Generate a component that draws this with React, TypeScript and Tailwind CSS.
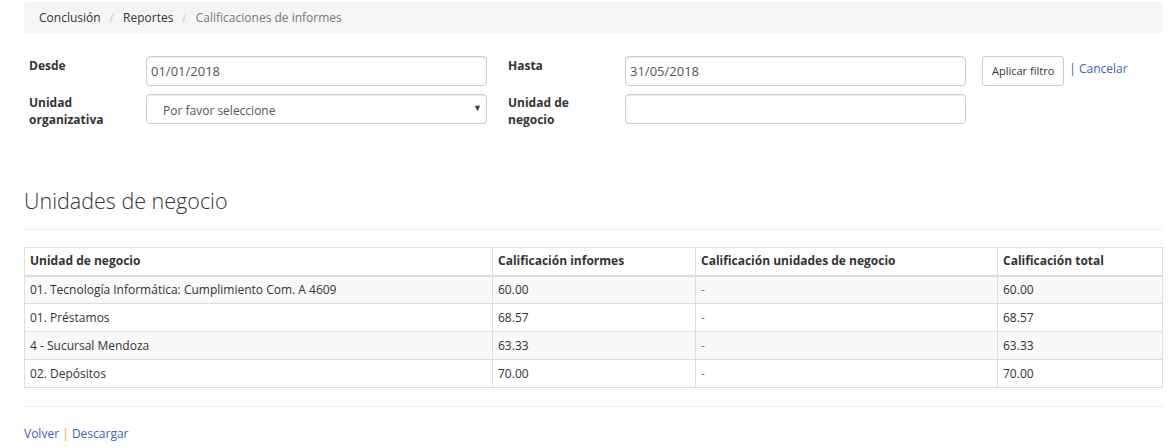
const ROWS = [
  { unidad: '01. Tecnología Informática: Cumplimiento Com. A 4609', informes: '60.00', total: '60.00' },
  { unidad: '01. Préstamos', informes: '68.57', total: '68.57' },
  { unidad: '4 - Sucursal Mendoza', informes: '63.33', total: '63.33' },
  { unidad: '02. Depósitos', informes: '70.00', total: '70.00' }
]

const inputCls =
  'h-[30px] rounded-[4px] border border-[#ccc] bg-white px-[4px] text-[13px] text-[#555] shadow-[inset_0_1px_1px_rgba(0,0,0,0.075)] outline-none'

export default function App() {
  return (
    <div className="min-h-[448px] bg-white pl-6 pr-[13px] font-['Open_Sans',sans-serif] text-[12px] text-[#333]">
      <ol className="mt-[2px] flex h-[31px] items-center rounded-[4px] bg-[#f5f5f5] px-[15px]">
        <li>Conclusión</li>
        <li className="px-[9px] text-[#ccc]">/</li>
        <li>Reportes</li>
        <li className="px-[9px] text-[#ccc]">/</li>
        <li className="text-[#777]">Calificaciones de informes</li>
      </ol>

      <div className="mt-[23px] flex">
        <div className="grid grid-cols-[122px_341px_21px_117px_341px] gap-y-[8px]">
          <label className="pl-[5px] pt-[1px] font-bold leading-[17px]">Desde</label>
          <input defaultValue="01/01/2018" className={inputCls} />
          <div />
          <label className="pt-[1px] font-bold leading-[17px]">Hasta</label>
          <input defaultValue="31/05/2018" className={inputCls} />

          <label className="pl-[5px] font-bold leading-[17px]">
            Unidad
            <br />
            organizativa
          </label>
          <div className="relative h-[30px] rounded-[4px] border border-[#ccc] bg-white shadow-[inset_0_1px_1px_rgba(0,0,0,0.075)]">
            <span className="absolute left-[16px] top-[7px] text-[#555]">Por favor seleccione</span>
            <span className="absolute right-[4px] top-[6px] text-[9px] text-[#444]">▼</span>
          </div>
          <div />
          <label className="font-bold leading-[17px]">
            Unidad de
            <br />
            negocio
          </label>
          <input className={inputCls} />
        </div>

        <div className="ml-[16px] flex h-[30px] items-start">
          <button className="h-[30px] rounded-[3px] border border-[#ccc] bg-white px-[9px] text-[11px] text-[#333]">
            Aplicar filtro
          </button>
          <span className="ml-[5px] mt-[4px]">
            <span className="text-[#555]">|</span> <span className="text-[#3d5fb5]">Cancelar</span>
          </span>
        </div>
      </div>

      <h3 className="mt-[60px] text-[21.5px] font-light leading-[26px] text-[#333]">Unidades de negocio</h3>
      <hr className="mb-[17px] mt-[15px] border-t border-[#eee]" />

      <table className="w-full table-fixed border-collapse border border-[#ddd]">
        <thead>
          <tr className="h-[28px]">
            <th className="w-[468px] border border-b-2 border-[#ddd] px-[5px] text-left font-bold">Unidad de negocio</th>
            <th className="w-[203px] border border-b-2 border-[#ddd] px-[5px] text-left font-bold">Calificación informes</th>
            <th className="w-[302px] border border-b-2 border-[#ddd] px-[5px] text-left font-bold">Calificación unidades de negocio</th>
            <th className="border border-b-2 border-[#ddd] px-[5px] text-left font-bold">Calificación total</th>
          </tr>
        </thead>
        <tbody>
          {ROWS.map((r, i) => (
            <tr key={r.unidad} className={i % 2 === 0 ? 'h-[28px] bg-[#f9f9f9]' : 'h-[28px] bg-white'}>
              <td className="border border-[#ddd] px-[5px]">{r.unidad}</td>
              <td className="border border-[#ddd] px-[5px]">{r.informes}</td>
              <td className="border border-[#ddd] px-[5px] text-[#777]">-</td>
              <td className="border border-[#ddd] px-[5px]">{r.total}</td>
            </tr>
          ))}
        </tbody>
      </table>

      <hr className="mb-[18px] mt-[18px] border-t border-[#eee]" />
      <div>
        <span className="text-[#3d5fb5]">Volver</span> <span className="text-[#e0a040]">|</span>{' '}
        <span className="text-[#3d5fb5]">Descargar</span>
      </div>
    </div>
  )
}
